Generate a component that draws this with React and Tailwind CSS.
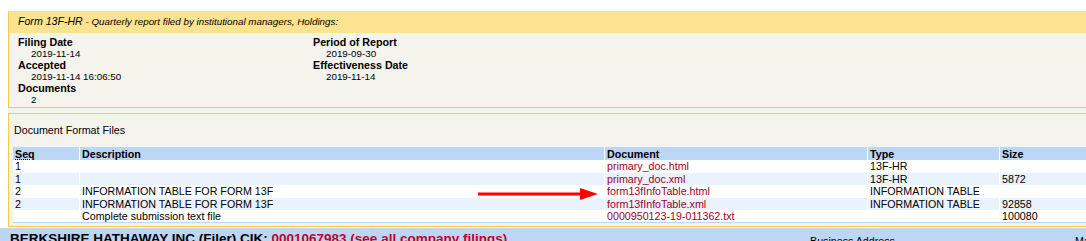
import React from 'react';

const rows = [
  { seq: '1', desc: '', doc: 'primary_doc.html', type: '13F-HR', size: '' },
  { seq: '1', desc: '', doc: 'primary_doc.xml', type: '13F-HR', size: '5872' },
  { seq: '2', desc: 'INFORMATION TABLE FOR FORM 13F', doc: 'form13fInfoTable.html', type: 'INFORMATION TABLE', size: '' },
  { seq: '2', desc: 'INFORMATION TABLE FOR FORM 13F', doc: 'form13fInfoTable.xml', type: 'INFORMATION TABLE', size: '92858' },
  { seq: '', desc: 'Complete submission text file', doc: '0000950123-19-011362.txt', type: '', size: '100080' },
];

const cols = 'grid grid-cols-[66px_524px_262px_131px_200px] gap-x-px';

const Field = ({ label, value }) => (
  <div>
    <div className="text-[10.7px] font-bold leading-[12px] h-[12px]">{label}</div>
    <div className="text-[9.8px] leading-[11px] h-[11px] pl-[13px]">{value}</div>
  </div>
);

export default function App() {
  return (
    <div className="w-[1086px] h-[241px] overflow-hidden bg-white text-black" style={{ fontFamily: '"Liberation Sans", Arial, sans-serif' }}>
      <div className="pt-[11px] pl-2 w-[1200px]">
        {/* filing header */}
        <div className="border-l border-b border-[#f5c94a]">
          <div className="h-[22px] bg-[#fbe38f] pl-[9px] flex items-center italic text-[9.8px]">
            <span className="text-[10.6px]">Form 13F-HR</span>
            <span>&nbsp;- Quarterly report filed by institutional managers, Holdings:</span>
          </div>
          <div className="h-[74px] bg-[#f4f3ec] pl-[9px] pt-[3px] flex">
            <div className="w-[295px]">
              <Field label="Filing Date" value="2019-11-14" />
              <Field label="Accepted" value="2019-11-14 16:06:50" />
              <Field label="Documents" value="2" />
            </div>
            <div>
              <Field label="Period of Report" value="2019-09-30" />
              <Field label="Effectiveness Date" value="2019-11-14" />
            </div>
          </div>
        </div>

        <div className="h-[5px] bg-[#f4f3ec]" />

        {/* document format files */}
        <div className="border-l border-t border-b border-[#f5c94a] bg-[#f4f3ec] pl-[4px] pt-[10px] pb-[3px]">
          <div className="text-[10.7px] leading-[13px] pl-px">Document Format Files</div>
          <div className="mt-[10px] bg-white border-b border-[#bcd6f5] text-[10.7px] relative">
            <div className={`${cols} bg-white`}>
              {['Seq', 'Description', 'Document', 'Type', 'Size'].map((h) => (
                <div key={h} className="bg-[#bcd6f5] h-[13px] leading-[14px] font-bold pl-[2px]">
                  {h === 'Seq' ? <abbr className="underline decoration-dotted" title="Sequence Number">Seq</abbr> : h}
                </div>
              ))}
            </div>
            {rows.map((r, i) => (
              <div key={i} className={`${cols} ${i % 2 ? 'bg-white pt-px' : ''}`}>
                {[r.seq, r.desc, r.doc, r.type, r.size].map((c, j) => (
                  <div key={j} className={`h-[12px] leading-[13px] pl-[2px] whitespace-nowrap ${i % 2 ? 'bg-[#eaf2fd]' : 'bg-white'} ${j === 2 ? 'text-[#a0002a]' : ''}`}>
                    {c}
                  </div>
                ))}
              </div>
            ))}
            {/* red arrow annotation */}
            <svg className="absolute left-[465px] top-[40px]" width="120" height="14" viewBox="0 0 120 14">
              <line x1="0" y1="7" x2="104" y2="7" stroke="#f00" strokeWidth="3" />
              <polygon points="102,1 120,7 102,13" fill="#f00" />
            </svg>
          </div>
        </div>
      </div>

      {/* company strip */}
      <div className="mt-px bg-[#bcd6f5] h-[20px] relative">
        <div className="pl-[10px] pt-[2px] text-[13.5px] font-bold leading-[18px] whitespace-nowrap">
          BERKSHIRE HATHAWAY INC (Filer) CIK: <span className="text-[#c0002a]">0001067983 (see all company filings)</span>
        </div>
        <div className="absolute left-[810px] top-[5px] text-[10.7px]">Business Address</div>
        <div className="absolute left-[1075px] top-[5px] text-[10.7px]">Mailing Address</div>
      </div>
    </div>
  );
}
